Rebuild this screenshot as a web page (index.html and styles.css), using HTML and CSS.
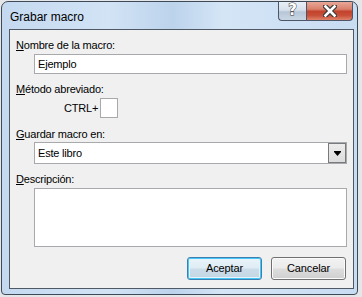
FILE: index.html
```html
<!DOCTYPE html>
<html lang="es">
<head>
<meta charset="utf-8">
<title>Grabar macro</title>
<link rel="stylesheet" href="styles.css">
</head>
<body>
<div class="window">
  <div class="titlebar">
    <span class="title">Grabar macro</span>
    <div class="caption-btns">
      <div class="cap-btn help"><span class="help-glyph">?</span></div>
      <div class="cap-btn close">
        <svg width="14" height="12" viewBox="0 0 14 12">
          <path d="M2.5 1.5 L11.5 10.5 M11.5 1.5 L2.5 10.5" stroke="#3b3b3b" stroke-width="5" stroke-linecap="square" fill="none"/>
          <path d="M2.5 1.5 L11.5 10.5 M11.5 1.5 L2.5 10.5" stroke="#ffffff" stroke-width="2.6" stroke-linecap="square" fill="none"/>
        </svg>
      </div>
    </div>
  </div>
  <div class="client">
    <div class="label first"><u>N</u>ombre de la macro:</div>
    <div class="field textbox">Ejemplo</div>

    <div class="label after-field"><u>M</u>étodo abreviado:</div>
    <div class="shortcut">
      <span class="ctrl">CTRL+</span>
      <div class="keybox"></div>
    </div>

    <div class="label after-key"><u>G</u>uardar macro en:</div>
    <div class="field combo">
      <span class="combo-text">Este libro</span>
      <div class="combo-arrow">
        <svg width="7" height="5" viewBox="0 0 7 5"><path d="M0 0 H7 V1 L3.5 5 L0 1 Z" fill="#000"/></svg>
      </div>
    </div>

    <div class="label after-combo"><u>D</u>escripción:</div>
    <div class="field textarea"></div>

    <div class="buttons">
      <div class="btn default">Aceptar</div>
      <div class="btn">Cancelar</div>
    </div>
  </div>
</div>
</body>
</html>
```
FILE: styles.css
```css
* { box-sizing: border-box; }

html, body {
  margin: 0;
  padding: 0;
}

body {
  width: 362px;
  height: 297px;
  background: #e4e6e9;
  font-family: "Liberation Sans", Arial, sans-serif;
  overflow: hidden;
}

.window {
  margin: 1px 0 0 1px;
  width: 357px;
  height: 294px;
  border: 1px solid #3f4a58;
  border-radius: 7px 7px 4px 4px;
  background:
    linear-gradient(to right, #c4d9f0 0%, #d2e3f5 30%, #bcd3ec 48%, #d4e5f6 62%, #c8dcf2 100%);
  display: flex;
  flex-direction: column;
  overflow: hidden;
}

.titlebar {
  height: 27px;
  display: flex;
  align-items: flex-start;
  justify-content: space-between;
  flex-shrink: 0;
}

.title {
  font-size: 12px;
  line-height: 14px;
  color: #000;
  padding: 8px 0 0 8px;
}

.caption-btns {
  display: flex;
  margin-right: 4px;
}

.cap-btn {
  height: 19px;
  display: flex;
  align-items: center;
  justify-content: center;
  border: 1px solid #4c5667;
  border-top: none;
}

.help {
  width: 28px;
  border-radius: 0 0 0 4px;
  border-right: none;
  background: linear-gradient(to bottom, #e9eff6 0%, #d7e1ec 45%, #b7c6d7 55%, #c9d6e4 100%);
}

.help-glyph {
  font-family: "DejaVu Sans", sans-serif;
  font-weight: bold;
  font-size: 15px;
  line-height: 15px;
  color: #ffffff;
  -webkit-text-stroke: 1px #3a3a3a;
  paint-order: stroke fill;
  margin-top: -1px;
}

.close {
  width: 47px;
  border-radius: 0 0 4px 0;
  background: linear-gradient(to bottom, #e8a797 0%, #d9806c 40%, #c3432c 52%, #c85039 75%, #e0826a 100%);
}

.close svg {
  display: block;
  margin-top: -1px;
}

.client {
  flex: 1;
  margin: 0 3px 5px 7px;
  border: 1px solid #4f5965;
  background: #f0f0f0;
  padding: 0 6px;
  display: flex;
  flex-direction: column;
  font-size: 11px;
  letter-spacing: -0.2px;
  color: #000;
}

.label {
  line-height: 14px;
  height: 14px;
  white-space: nowrap;
}

.label.first { margin-top: 8px; }
.label.after-field { margin-top: 8px; }
.label.after-key { margin-top: 9px; }
.label.after-combo { margin-top: 8px; }

.field {
  margin-left: 18px;
  width: 313px;
  border: 1px solid #a7a9ad;
  background: #ffffff;
}

.textbox {
  margin-top: 2px;
  height: 20px;
  line-height: 18px;
  padding-left: 3px;
}

.shortcut {
  margin-top: 2px;
  margin-left: 48px;
  height: 20px;
  display: flex;
  align-items: center;
}

.ctrl {
  line-height: 14px;
  margin-right: 2px;
}

.keybox {
  width: 18px;
  height: 20px;
  border: 1px solid #a7a9ad;
  background: #ffffff;
}

.combo {
  margin-top: 1px;
  height: 22px;
  display: flex;
  align-items: stretch;
  justify-content: space-between;
  padding: 0 0 0 3px;
}

.combo-text {
  line-height: 20px;
}

.combo-arrow {
  width: 18px;
  margin: 0;
  border: 1px solid #777a7f;
  background: linear-gradient(to bottom, #ececec 0%, #dcdcdc 100%);
  display: flex;
  align-items: center;
  justify-content: center;
}

.combo-arrow svg { display: block; }

.textarea {
  margin-top: 2px;
  height: 59px;
}

.buttons {
  margin-top: 10px;
  display: flex;
  justify-content: flex-end;
  gap: 9px;
  padding-right: 1px;
}

.btn {
  width: 75px;
  height: 23px;
  border: 1px solid #707070;
  border-radius: 3px;
  background: linear-gradient(to bottom, #f2f2f2 0%, #ebebeb 48%, #dddddd 52%, #cfcfcf 100%);
  box-shadow: inset 0 0 0 1px #fbfbfb;
  text-align: center;
  line-height: 21px;
  letter-spacing: -0.1px;
}

.btn.default {
  border-color: #3c7fb1;
  box-shadow: inset 0 0 0 1px #48c6f5, inset 0 0 0 2px #e6f5fc;
  background: linear-gradient(to bottom, #eaf4fa 0%, #dfecf4 48%, #cbdde9 52%, #c2d6e3 100%);
}
```
